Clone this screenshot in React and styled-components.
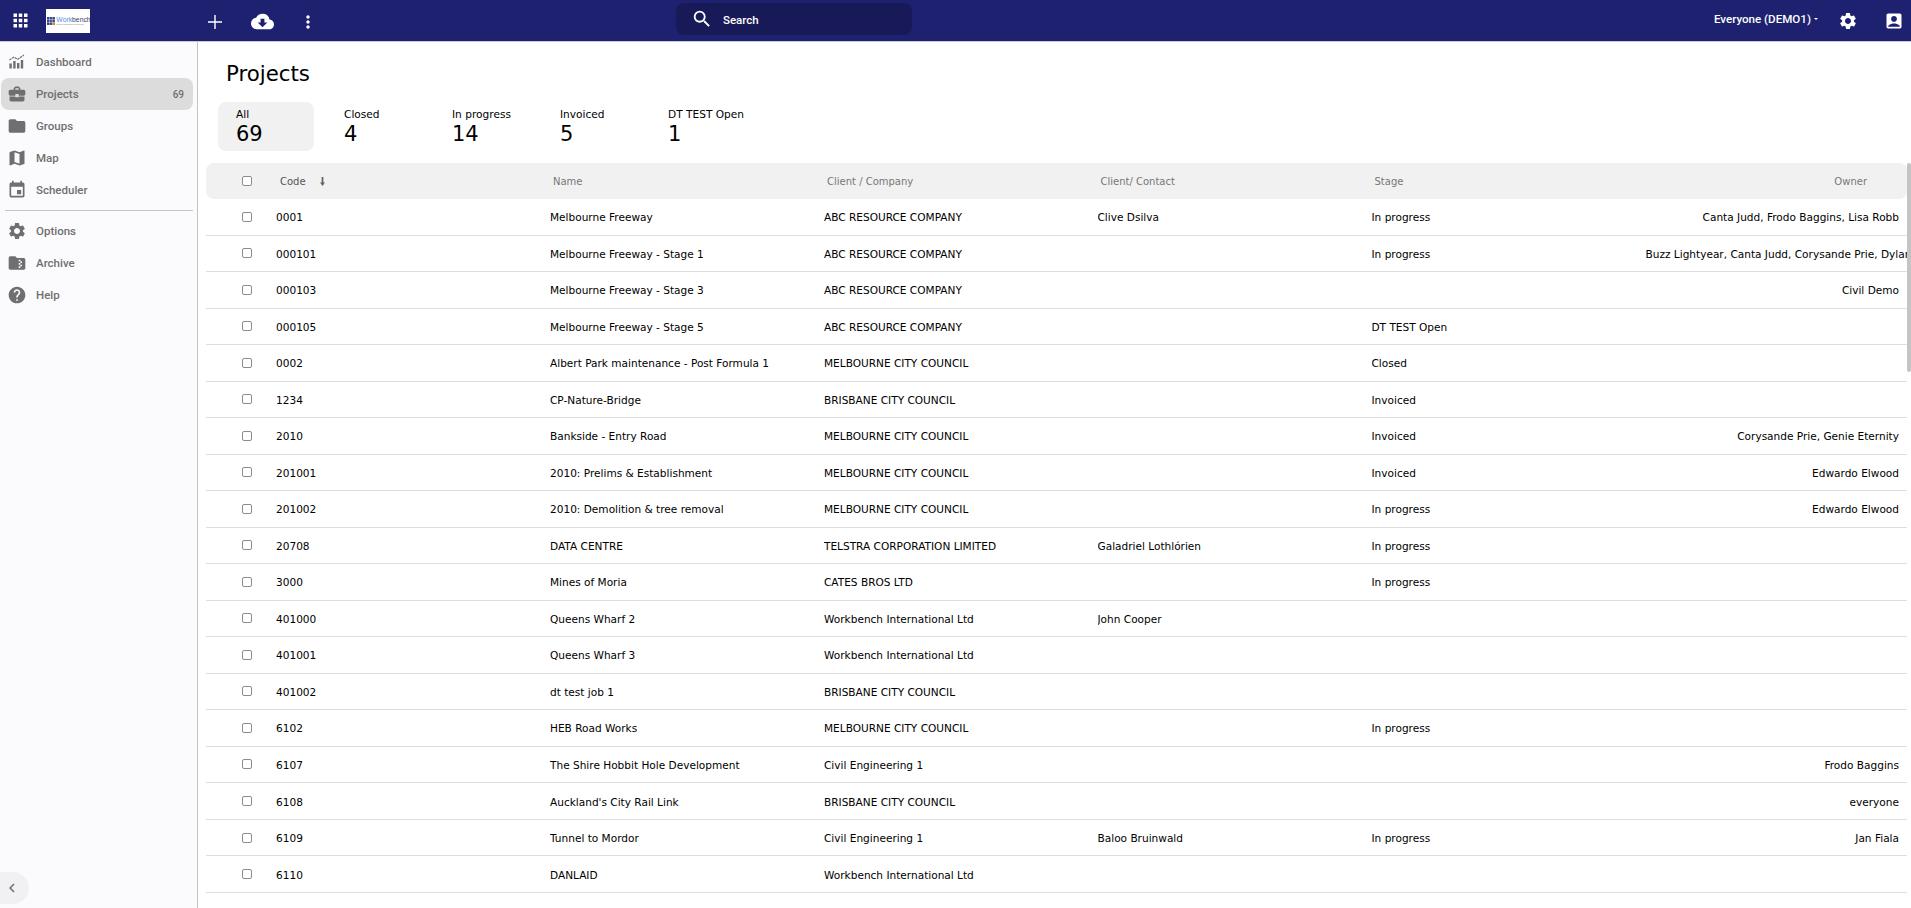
import React from "react";
import styled, { createGlobalStyle } from "styled-components";
import {
  MdApps,
  MdCloudDownload,
  MdMoreVert,
  MdSearch,
  MdSettings,
  MdAccountBox,
  MdBusinessCenter,
  MdFolder,
  MdMap,
  MdEvent,
  MdFolderZip,
  MdHelp,
  MdChevronLeft,
} from "react-icons/md";

const GlobalStyle = createGlobalStyle`
  html, body {
    margin: 0;
    height: 100%;
    overflow: hidden;
    background: #fff;
    font-family: "DejaVu Sans", Verdana, sans-serif;
  }
  * { box-sizing: border-box; }
`;

const projects = [
  ["0001", "Melbourne Freeway", "ABC RESOURCE COMPANY", "Clive Dsilva", "In progress", "Canta Judd, Frodo Baggins, Lisa Robb"],
  ["000101", "Melbourne Freeway - Stage 1", "ABC RESOURCE COMPANY", "", "In progress", "Buzz Lightyear, Canta Judd, Corysande Prie, Dylan Hunt, Edwardo Elwood"],
  ["000103", "Melbourne Freeway - Stage 3", "ABC RESOURCE COMPANY", "", "", "Civil Demo"],
  ["000105", "Melbourne Freeway - Stage 5", "ABC RESOURCE COMPANY", "", "DT TEST Open", ""],
  ["0002", "Albert Park maintenance - Post Formula 1", "MELBOURNE CITY COUNCIL", "", "Closed", ""],
  ["1234", "CP-Nature-Bridge", "BRISBANE CITY COUNCIL", "", "Invoiced", ""],
  ["2010", "Bankside - Entry Road", "MELBOURNE CITY COUNCIL", "", "Invoiced", "Corysande Prie, Genie Eternity"],
  ["201001", "2010: Prelims & Establishment", "MELBOURNE CITY COUNCIL", "", "Invoiced", "Edwardo Elwood"],
  ["201002", "2010: Demolition & tree removal", "MELBOURNE CITY COUNCIL", "", "In progress", "Edwardo Elwood"],
  ["20708", "DATA CENTRE", "TELSTRA CORPORATION LIMITED", "Galadriel Lothlórien", "In progress", ""],
  ["3000", "Mines of Moria", "CATES BROS LTD", "", "In progress", ""],
  ["401000", "Queens Wharf 2", "Workbench International Ltd", "John Cooper", "", ""],
  ["401001", "Queens Wharf 3", "Workbench International Ltd", "", "", ""],
  ["401002", "dt test job 1", "BRISBANE CITY COUNCIL", "", "", ""],
  ["6102", "HEB Road Works", "MELBOURNE CITY COUNCIL", "", "In progress", ""],
  ["6107", "The Shire Hobbit Hole Development", "Civil Engineering 1", "", "", "Frodo Baggins"],
  ["6108", "Auckland's City Rail Link", "BRISBANE CITY COUNCIL", "", "", "everyone"],
  ["6109", "Tunnel to Mordor", "Civil Engineering 1", "Baloo Bruinwald", "In progress", "Jan Fiala"],
  ["6110", "DANLAID", "Workbench International Ltd", "", "", ""],
];

const tabs = [
  ["All", 69],
  ["Closed", 4],
  ["In progress", 14],
  ["Invoiced", 5],
  ["DT TEST Open", 1],
];

function DashboardIcon() {
  return (
    <svg width="20" height="20" viewBox="0 0 20 20" fill="#6f6f6f">
      <rect x="2.4" y="11.5" width="2.4" height="5" />
      <rect x="6.2" y="9" width="2.4" height="7.5" />
      <rect x="10" y="11" width="2.4" height="5.5" />
      <rect x="13.8" y="8" width="2.4" height="8.5" />
      <path d="M2.4 8 6.8 5.2 10.8 7.2 17 3" fill="none" stroke="#6f6f6f" strokeWidth="1.2" strokeDasharray="2.4 .7" />
    </svg>
  );
}

function ThinPlus() {
  return (
    <svg width="24" height="24" viewBox="0 0 24 24" fill="none" stroke="#fff" strokeWidth="1.4">
      <path d="M12 5v14M5 12h14" />
    </svg>
  );
}

function SortArrow() {
  return (
    <svg width="5" height="9" viewBox="0 0 5 9" fill="#666">
      <path d="M1.6 0h1.8v5.6H5L2.5 9 0 5.6h1.6z" />
    </svg>
  );
}

function Logo() {
  return (
    <LogoBox>
      <svg width="8" height="8" viewBox="0 0 8 8">
        <rect width="8" height="8" fill="#2b3a80" />
        <rect x="5.3" y="5.3" width="2.7" height="2.7" fill="#e08a2c" />
        <path d="M2.6 0v8M5.3 0v8M0 2.6h8M0 5.3h8" stroke="#fff" strokeWidth=".5" />
      </svg>
      <LogoText>
        <LogoName>
          <span>Work</span>bench
        </LogoName>
        <LogoTag>Project Management Solutions</LogoTag>
      </LogoText>
    </LogoBox>
  );
}

export default function App() {
  return (
    <>
      <GlobalStyle />
      <Page>
        <TopBar>
          <TopLeft>
            <AppsButton>
              <MdApps size={21} />
            </AppsButton>
            <Logo />
            <Actions>
              <ThinPlus />
              <MdCloudDownload size={23} />
              <MdMoreVert size={20} />
            </Actions>
          </TopLeft>
          <SearchBox>
            <MdSearch size={22} />
            <SearchText>Search</SearchText>
          </SearchBox>
          <TopRight>
            <Tenant>
              Everyone (DEMO1)<Caret />
            </Tenant>
            <MdSettings size={20} />
            <MdAccountBox size={20} />
          </TopRight>
        </TopBar>
        <Body>
          <Sidebar>
            <NavItem>
              <DashboardIcon />
              <NavLabel>Dashboard</NavLabel>
            </NavItem>
            <NavItem $active>
              <MdBusinessCenter size={20} />
              <NavLabel>Projects</NavLabel>
              <NavCount>69</NavCount>
            </NavItem>
            <NavItem>
              <MdFolder size={20} />
              <NavLabel>Groups</NavLabel>
            </NavItem>
            <NavItem>
              <MdMap size={20} />
              <NavLabel>Map</NavLabel>
            </NavItem>
            <NavItem>
              <MdEvent size={20} />
              <NavLabel>Scheduler</NavLabel>
            </NavItem>
            <NavDivider />
            <NavItem>
              <MdSettings size={20} />
              <NavLabel>Options</NavLabel>
            </NavItem>
            <NavItem>
              <MdFolderZip size={20} />
              <NavLabel>Archive</NavLabel>
            </NavItem>
            <NavItem>
              <MdHelp size={20} />
              <NavLabel>Help</NavLabel>
            </NavItem>
            <CollapseButton>
              <MdChevronLeft size={18} />
            </CollapseButton>
          </Sidebar>
          <Main>
            <Title>Projects</Title>
            <Tabs>
              {tabs.map(([label, count], i) => (
                <Tab key={label} $active={i === 0}>
                  <TabLabel>{label}</TabLabel>
                  <TabCount>{count}</TabCount>
                </Tab>
              ))}
            </Tabs>
            <Table>
              <HeadRow>
                <CheckCell>
                  <Checkbox />
                </CheckCell>
                <HeadCell $strong>
                  Code
                  <SortIcon>
                    <SortArrow />
                  </SortIcon>
                </HeadCell>
                <HeadCell>Name</HeadCell>
                <HeadCell>Client / Company</HeadCell>
                <HeadCell>Client/ Contact</HeadCell>
                <HeadCell>Stage</HeadCell>
                <OwnerHead>Owner</OwnerHead>
              </HeadRow>
              {projects.map((p) => (
                <Row key={p[0]}>
                  <CheckCell>
                    <Checkbox />
                  </CheckCell>
                  <Cell>{p[0]}</Cell>
                  <Cell>{p[1]}</Cell>
                  <Cell>{p[2]}</Cell>
                  <Cell>{p[3]}</Cell>
                  <Cell>{p[4]}</Cell>
                  <OwnerCell>{p[5]}</OwnerCell>
                </Row>
              ))}
              <ScrollThumb />
            </Table>
          </Main>
        </Body>
      </Page>
    </>
  );
}

const Page = styled.div`
  display: flex;
  flex-direction: column;
  height: 100vh;
  overflow: hidden;
`;

const TopBar = styled.header`
  display: grid;
  grid-template-columns: 676px 236px 1fr;
  align-items: center;
  flex: none;
  height: 42px;
  background: #1e2170;
  border-bottom: 1px solid #c9c9d6;
  color: #fff;
`;

const TopLeft = styled.div`
  display: flex;
  align-items: center;
`;

const AppsButton = styled.div`
  display: flex;
  width: 46px;
  padding-left: 10px;
`;

const LogoBox = styled.div`
  display: flex;
  align-items: center;
  gap: 1.5px;
  width: 44px;
  height: 24px;
  padding-left: 1px;
  background: #fff;
`;

const LogoText = styled.div`
  display: flex;
  flex-direction: column;
  overflow: hidden;
`;

const LogoName = styled.div`
  font: 6.8px/7px "Liberation Sans", sans-serif;
  color: #35406e;
  white-space: nowrap;
  span {
    color: #4f8fd8;
  }
`;

const LogoTag = styled.div`
  font: 2px/3px "Liberation Sans", sans-serif;
  color: #777;
  white-space: nowrap;
`;

const Actions = styled.div`
  display: flex;
  align-items: center;
  gap: 24px;
  margin: 2px 0 0 113px;
`;

const SearchBox = styled.div`
  display: flex;
  align-items: center;
  gap: 10px;
  height: 32px;
  margin-top: -3px;
  padding-left: 15px;
  border-radius: 8px;
  background: #181a58;
  color: #fff;
`;

const SearchText = styled.span`
  padding-top: 1px;
  font: 500 11.5px "Roboto", sans-serif;
`;

const TopRight = styled.div`
  display: flex;
  align-items: center;
  justify-content: flex-end;
  gap: 26px;
  padding-right: 7px;
`;

const Tenant = styled.div`
  display: flex;
  align-items: center;
  margin: -3px -6px 0 0;
  font: 500 11.6px "Roboto", sans-serif;
`;

const Caret = styled.span`
  width: 0;
  height: 0;
  margin-left: 3px;
  border: 2px solid transparent;
  border-top-color: #fff;
  border-bottom-width: 0;
`;

const Body = styled.div`
  display: flex;
  flex: 1;
  min-height: 0;
`;

const Sidebar = styled.nav`
  position: relative;
  display: flex;
  flex-direction: column;
  flex: none;
  width: 198px;
  padding: 4px 4px 0 1px;
  background: #fbfbfe;
  border-right: 1px solid #c4c4c4;
`;

const NavItem = styled.div`
  display: flex;
  align-items: center;
  flex: none;
  height: 32px;
  padding: 0 9px 0 6px;
  border-radius: 8px;
  background: ${(p) => (p.$active ? "#dcdcdc" : "transparent")};
  color: #6f6f6f;
`;

const NavLabel = styled.span`
  margin-left: 9px;
  font: 500 11.5px/16px "Roboto", sans-serif;
  color: #6f6f6f;
`;

const NavCount = styled.span`
  margin-left: auto;
  font: 500 10px "Roboto", sans-serif;
  color: #6f6f6f;
`;

const NavDivider = styled.div`
  height: 1px;
  margin: 4px 0 4px 4px;
  background: #c4c4c4;
`;

const CollapseButton = styled.div`
  position: absolute;
  left: 0;
  bottom: 4px;
  display: flex;
  align-items: center;
  padding-left: 3px;
  width: 29px;
  height: 32px;
  border-radius: 0 16px 16px 0;
  background: #f1f1f3;
  color: #6f6f6f;
`;

const Main = styled.main`
  flex: 1;
  min-width: 0;
  padding: 0 4px 0 8px;
`;

const Title = styled.h1`
  margin: 0 0 0 20px;
  height: 60px;
  padding-top: 17px;
  font-size: 21.3px;
  line-height: 30px;
  font-weight: 400;
  color: #000;
`;

const Tabs = styled.div`
  display: flex;
  gap: 12px;
  height: 49px;
  margin: 0 0 12px 12px;
`;

const Tab = styled.div`
  width: 96px;
  padding: 5px 0 0 18px;
  border-radius: 8px;
  background: ${(p) => (p.$active ? "#f1f1f1" : "transparent")};
  white-space: nowrap;
  color: #000;
`;

const TabLabel = styled.div`
  font-size: 10.6px;
  line-height: 14px;
`;

const TabCount = styled.div`
  padding-top: 1px;
  font-size: 21px;
  line-height: 24px;
`;

const Table = styled.div`
  position: relative;
`;

const columns = "70px 274px 274px 273.5px 274px 274px 1fr";

const HeadRow = styled.div`
  display: grid;
  grid-template-columns: ${columns};
  align-items: center;
  height: 36px;
  border-radius: 8px;
  background: #f1f1f1;
`;

const Row = styled.div`
  display: grid;
  grid-template-columns: ${columns};
  align-items: center;
  height: 36.53px;
  border-bottom: 1px solid #dedede;
`;

const CheckCell = styled.div`
  display: flex;
  padding-left: 36px;
`;

const Checkbox = styled.span`
  width: 10px;
  height: 10px;
  border: 1px solid #8c8c8c;
  border-radius: 2px;
  background: #fff;
`;

const Cell = styled.div`
  padding-top: 1px;
  font-size: 10.55px;
  color: #000;
  white-space: nowrap;
  overflow: hidden;
`;

const HeadCell = styled.div`
  display: flex;
  align-items: center;
  padding-left: ${(p) => (p.$strong ? "4px" : "3px")};
  font-size: 10px;
  color: ${(p) => (p.$strong ? "#555" : "#777")};
  white-space: nowrap;
`;

const SortIcon = styled.span`
  display: flex;
  margin-left: 14px;
`;

const OwnerHead = styled(HeadCell)`
  justify-content: flex-end;
  padding-right: 40px;
`;

const OwnerCell = styled(Cell)`
  padding-right: 8px;
  text-align: right;
`;

const ScrollThumb = styled.div`
  position: absolute;
  top: 0;
  right: -4px;
  width: 4px;
  height: 209px;
  border-radius: 2px;
  background: #c4c4c4;
`;
